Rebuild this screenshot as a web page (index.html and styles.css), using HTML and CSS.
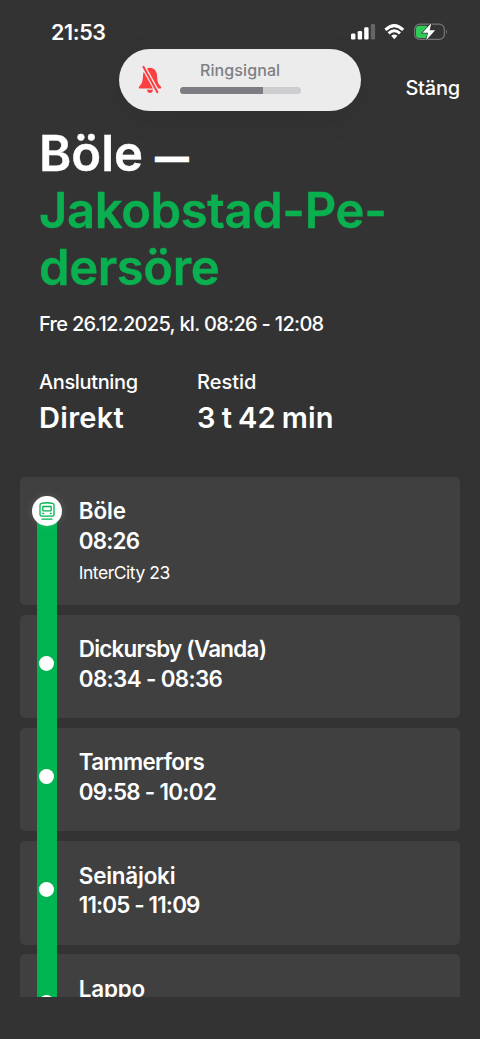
FILE: index.html
```html
<!DOCTYPE html>
<html lang="sv">
<head>
<meta charset="utf-8">
<meta name="viewport" content="width=device-width">
<title>Böle – Jakobstad-Pedersöre</title>
<link rel="stylesheet" href="styles.css">
</head>
<body>
<div class="screen">
  <header class="status">
    <span class="clock">21:53</span>
    <svg class="status-icons" width="98" height="20" viewBox="0 0 98 20">
      <g fill="#fff"><rect x="1" y="11.6" width="4.4" height="5.9" rx="1.2"/><rect x="7.7" y="9" width="4.4" height="8.5" rx="1.2"/><rect x="14.2" y="5.3" width="4.4" height="12.2" rx="1.2"/></g>
      <rect x="20.8" y="2" width="4.3" height="15.5" rx="1.2" fill="#666"/>
      <g fill="none" stroke="#fff" stroke-width="3"><path d="M35.4 7.8Q44.3 -.6 53.2 7.8"/><path d="M38.6 11.4Q44.3 6.2 50 11.4"/></g>
      <path d="M41.2 13.8Q44.3 11.2 47.4 13.8L44.3 17.2Z" fill="#fff"/>
      <rect x="64.7" y="2.2" width="29.6" height="15.2" rx="5" fill="none" stroke="#777" stroke-width="1.2"/>
      <path d="M96 7.5q2 2.3 0 4.6z" fill="#777"/>
      <rect x="66" y="3.7" width="13" height="12.2" rx="3.2" fill="#30cb58"/>
      <path d="M81.2 1.2L72.4 10.8H78L76.2 18.2L85.2 8.3H79.7Z" fill="#fff" stroke="#333" stroke-width="1.4" paint-order="stroke"/>
    </svg>
  </header>
  <nav class="nav"><a class="close">Stäng</a></nav>
  <div class="hud">
    <svg class="bell" width="24" height="30" viewBox="0 0 24 30">
      <path d="M12 2.8C16 3 18.8 6 19 10.5C19.2 16.5 20 18.6 22.4 21Q24.2 23.5 22.3 23.5H1.7Q-.2 23.5 1.6 21C4 18.6 4.8 16.5 5 10.5C5.2 6 8 3 12 2.8Z" fill="#fb3e40"/>
      <path d="M9 24.8H15Q14.4 28 12 28T9 24.8Z" fill="#fb3e40"/>
      <path d="M5 1L20 28" stroke="#ececed" stroke-width="4.6"/>
      <path d="M5.4 1.8L19.4 27.2" stroke="#fb3e40" stroke-width="2" stroke-linecap="round"/>
    </svg>
    <div class="hud-body">
      <span class="hud-label">Ringsignal</span>
      <div class="track"><div class="level"></div></div>
    </div>
  </div>
  <section class="trip">
    <h1 class="title"><span class="from">Böle <span class="dash">—</span></span><br><span class="to1">Jakobstad-Pe-</span><br><span class="to2">dersöre</span></h1>
    <p class="date">Fre 26.12.2025, kl. 08:26 - 12:08</p>
    <div class="facts">
      <div class="fact"><span class="label conn">Anslutning</span><span class="value direct">Direkt</span></div>
      <div class="fact"><span class="label rest">Restid</span><span class="value dur">3 t 42 min</span></div>
    </div>
  </section>
  <main class="stops">
    <div class="line"></div>
    <article class="stop first">
      <div class="rail"><span class="badge">
        <svg width="30" height="30" viewBox="0 0 30 30" fill="none" stroke="#00b451" stroke-width="1.3" stroke-linecap="round">
          <path d="M9.3 7.4Q15 6.1 20.7 7.4Q22 7.8 22 9.2V18.6Q22 20.2 20.4 20.2H9.6Q8 20.2 8 18.6V9.2Q8 7.8 9.3 7.4Z"/>
          <rect x="10.8" y="10.5" width="8.4" height="4.3" rx=".6"/>
          <path d="M10.8 17.5H11.6M18.4 17.5H19.2M10 23.2H20"/>
        </svg></span></div>
      <div class="info"><span class="name n1">Böle</span><span class="time t1">08:26</span><span class="train">InterCity 23</span></div>
    </article>
    <article class="stop"><div class="rail"><span class="dot"></span></div><div class="info"><span class="name n2">Dickursby (Vanda)</span><span class="time t2">08:34 - 08:36</span></div></article>
    <article class="stop"><div class="rail"><span class="dot"></span></div><div class="info"><span class="name n3">Tammerfors</span><span class="time t3">09:58 - 10:02</span></div></article>
    <article class="stop"><div class="rail"><span class="dot"></span></div><div class="info"><span class="name n4">Seinäjoki</span><span class="time t4">11:05 - 11:09</span></div></article>
    <article class="stop"><div class="rail"><span class="dot"></span></div><div class="info"><span class="name n5">Lappo</span></div></article>
  </main>
</div>
</body>
</html>
```
FILE: styles.css
```css
* { box-sizing: border-box; }
body { margin: 0; background: #333; color: #fff; font-family: Inter, "Liberation Sans", sans-serif; }
.screen { position: relative; width: 480px; height: 1039px; overflow: hidden; display: flex; flex-direction: column; background: #333; }
.status { height: 64px; padding: 0 32px 0 51px; display: flex; justify-content: space-between; align-items: center; flex: none; }
.clock { font-size: 21.5px; font-weight: 600; letter-spacing: -0.4px; }
.nav { height: 61px; flex: none; padding: 12px 20px 0 0; text-align: right; }
.close { font-size: 20px; line-height: 25px; font-weight: 500; letter-spacing: -0.2px; }
.hud { position: absolute; left: 119px; top: 49px; width: 242px; height: 62px; border-radius: 31px; background: #ececed; box-shadow: 0 8px 32px rgba(0,0,0,.07); display: flex; padding: 0 0 0 19px; }
.bell { margin-top: 16px; flex: none; }
.hud-body { width: 121px; margin-left: 17.6px; padding-top: 11px; text-align: center; }
.hud-label { display: block; font-size: 16px; line-height: 20px; font-weight: 500; color: #7e7e83; letter-spacing: 0.1px; }
.track { height: 7px; margin-top: 7px; border-radius: 4px; background: #cdcdd0; overflow: hidden; }
.level { width: 83px; height: 7px; background: #7c7c82; }
.trip { flex: none; height: 352px; padding-left: 39px; }
.title { margin: 0; font-size: 49px; line-height: 57px; font-weight: 600; letter-spacing: -0.4px; white-space: nowrap; -webkit-text-stroke: 0.4px currentColor; }
.from { letter-spacing: 0; }
.dash { display: inline-block; transform: translateY(2.5px) scaleX(0.69); transform-origin: 0 50%; }
.to1, .to2 { color: #0ab04f; }
.date { margin: 15px 0 0; font-size: 20px; line-height: 26px; font-weight: 500; letter-spacing: -0.7px; white-space: nowrap; }
.facts { display: flex; margin-top: 32px; }
.fact { width: 158px; display: flex; flex-direction: column; align-items: flex-start; white-space: nowrap; }
.label { font-size: 20px; line-height: 26px; font-weight: 500; }
.conn { letter-spacing: -0.37px; }
.value { margin-top: 5px; font-size: 29px; line-height: 36px; font-weight: 600; }
.direct { letter-spacing: 0.3px; }
.dur { letter-spacing: 0.1px; word-spacing: -1.3px; }
.stops { position: relative; height: 520px; overflow: hidden; flex: none; padding: 0 20px; display: flex; flex-direction: column; gap: 9.8px; }
.line { position: absolute; left: 37px; top: 34px; width: 19.5px; bottom: 0; background: #00b451; }
.stop { flex: none; height: 103.4px; border-radius: 5px; background: #404040; display: flex; }
.stop.first { height: 128px; }
.rail { position: relative; z-index: 1; width: 53.4px; flex: none; display: flex; justify-content: center; padding-top: 41px; }
.first .rail { padding-top: 19.3px; }
.dot { width: 14.8px; height: 14.8px; border-radius: 50%; background: #fff; }
.badge { width: 30px; height: 30px; border-radius: 50%; background: #fff; box-shadow: 0 0 8px rgba(255,255,255,.12); }
.badge svg { display: block; }
.info { display: flex; flex-direction: column; align-items: flex-start; padding: 19.4px 0 0 5.4px; font-size: 22.4px; line-height: 29.4px; font-weight: 600; white-space: nowrap; }
.n1 { letter-spacing: -0.1px; }
.t1 { letter-spacing: -0.8px; }
.n2 { letter-spacing: -0.75px; }
.t2 { letter-spacing: -0.65px; }
.n3 { letter-spacing: -0.65px; }
.t3 { letter-spacing: -0.7px; }
.n4 { letter-spacing: -0.2px; }
.t4 { letter-spacing: -0.85px; }
.n5 { letter-spacing: -0.2px; }
.train { margin-top: 6px; font-size: 17.5px; line-height: 24px; font-weight: 400; letter-spacing: -0.48px; }
```
